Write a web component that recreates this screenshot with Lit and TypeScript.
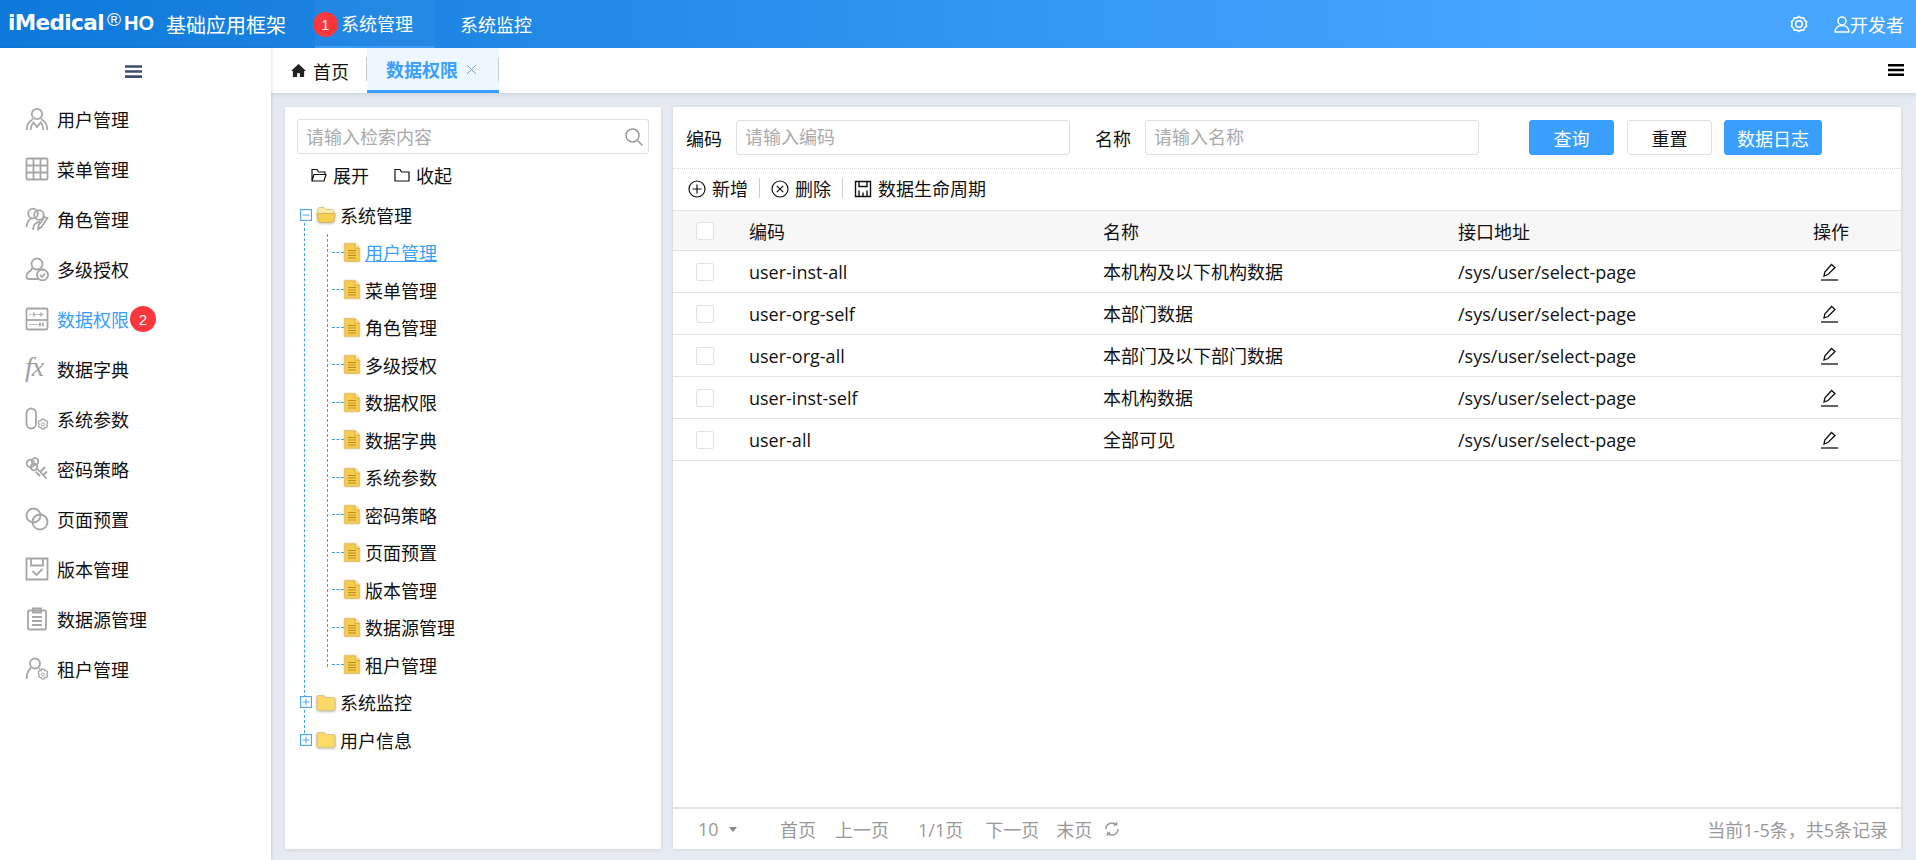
import { LitElement, html, css, svg } from "lit";
import { customElement } from "lit/decorators.js";

const flower = svg`<path d="M18 12c1 0 1.800.9 2 1.700.9-.2 2-.1 2.500 1 .4 1-.1 1.900-.7 2.500.6.600.9 1.600.4 2.500-.6.900-1.600 1-2.400.8-.2.800-.9 1.700-1.800 1.700s-1.600-.9-1.800-1.700c-.8.200-1.800.1-2.400-.8-.5-.9-.2-1.900.4-2.500-.6-.6-1.100-1.500-.7-2.500.5-1.100 1.600-1.200 2.500-1 .2-.8 1-1.700 2-1.700z" stroke-width="1.300"/><circle cx="18" cy="17.500" r="1.500" stroke-width="1"/>`;
const menuIcons: Record<string, unknown> = {
  user: svg`<circle cx="12" cy="7" r="5.200"/><path d="M8 12C4 14 1.800 18 1.600 23M16 12c4 2 6.200 6 6.400 11M5.500 23c.3-3.500 1.500-6 2.800-7.500L12 20l3.700-4.500c1.300 1.500 2.500 4 2.800 7.500"/>`,
  grid: svg`<rect x="1.500" y="1.500" width="21" height="21" rx="1"/><path d="M1.500 8.500h21M1.500 15.500h21M8.500 1.500v21M15.500 1.500v21"/>`,
  role: svg`<circle cx="8" cy="6.500" r="4.800"/><circle cx="14" cy="8" r="4.800"/><path d="M1.500 20c.5-5 2-7.500 5-8.500M8 23c0-5 3-8 7-8M22.500 11l-6 9-3.500 2 .5-3.500 6-8.500z"/>`,
  auth: svg`<circle cx="12" cy="7" r="5.500"/><path d="M7.500 11c-1 2-1.500 2.500-3 3.500-2 1-3 2.500-3 5 0 2 .8 2.500 2.500 2.500h9M16.500 12c1 .5 2 1 2.500 1.500"/><circle cx="17.500" cy="18" r="5.500"/><path d="M15 18l2 2 3-3.500"/>`,
  data: svg`<rect x="1.500" y="1.500" width="21" height="21" rx="1.500"/><path d="M1.500 13h21"/><path d="M4.500 7.500h15M4.500 17.500h15" stroke-width="1.200" stroke-dasharray="2 1"/><path d="M9 5.500v4M16 5.500v4M15 15.500v4M18 15.500v4" stroke-width="1.500"/>`,
  param: svg`<rect x="1.500" y="1.500" width="9.500" height="20" rx="4.750"/>${flower}`,
  key: svg`<circle cx="5.500" cy="6.500" r="3.800"/><circle cx="10" cy="4.500" r="3.300"/><circle cx="9" cy="10" r="3.300"/><path d="M11.500 11l10 10.500M15 15l5-5M18 18.500l4-4M11 15l4 4"/>`,
  page: svg`<circle cx="8.500" cy="8.500" r="7"/><circle cx="15" cy="15" r="7.500"/>`,
  save: svg`<path d="M1.500 1.500h21v21h-21z"/><path d="M6 1.500v7h12v-7M7.500 14l4 4 6-6"/>`,
  clip: svg`<rect x="3" y="3.500" width="18" height="19" rx="1.500"/><path d="M8 1.500h8v4h-8zM7 10h10M7 14h10M7 18h10"/>`,
  tenant: svg`<circle cx="10" cy="6.500" r="5"/><path d="M6 11C3 13 1.800 17 1.500 22M14 11.500c.6.300 1.200.7 1.700 1.200"/>${flower}`,
};

const menus = [
  ["user", "用户管理"], ["grid", "菜单管理"], ["role", "角色管理"], ["auth", "多级授权"],
  ["data", "数据权限"], ["fx", "数据字典"], ["param", "系统参数"], ["key", "密码策略"],
  ["page", "页面预置"], ["save", "版本管理"], ["clip", "数据源管理"], ["tenant", "租户管理"],
];
const children = ["用户管理", "菜单管理", "角色管理", "多级授权", "数据权限", "数据字典", "系统参数", "密码策略", "页面预置", "版本管理", "数据源管理", "租户管理"];
const rows = [
  ["user-inst-all", "本机构及以下机构数据"],
  ["user-org-self", "本部门数据"],
  ["user-org-all", "本部门及以下部门数据"],
  ["user-inst-self", "本机构数据"],
  ["user-all", "全部可见"],
];

const burger = (cls: string) => html`<svg class=${cls} viewBox="0 0 16 12"><path d="M0 1.250h16M0 6h16M0 10.750h16" fill="none" stroke="currentColor" stroke-width="2.500"/></svg>`;
const fileIcon = html`<svg class="file" viewBox="0 0 16 19"><path d="M.8.800h10l4.400 4.400v13H.8z" fill="#f7cd4e" stroke="#e5bd63" stroke-width="1.200"/><path d="M11 .8v4.400h4.200" fill="#fbe7a0" stroke="#d9a93a"/><path d="M4 7.500h8M4 10h8M4 12.500h8M4 15h8" stroke="#bd8a1c" stroke-width="1"/></svg>`;
const folderClosed = html`<svg class="folder" viewBox="0 0 20 17"><path d="M1 3.500C1 2 2 1.500 3 1.500h4.500L9.500 3.500H17c1.200 0 2 .8 2 2v9c0 1.200-.8 1.800-2 1.800H3c-1.200 0-2-.6-2-1.800z" fill="#fdd968" stroke="#d9c48c" stroke-width="1.200"/></svg>`;
const folderOpen = html`<svg class="folder" viewBox="0 0 20 17"><path d="M2 3.500C2 2 3 1.500 4 1.500h4L10 3.500h6c1 0 2 .7 2 2V8H2z" fill="#fbeaa9" stroke="#d9c48c"/><path d="M.8 7.500h18.400L18 14.500c-.2 1.200-1 1.800-2 1.800H4c-1 0-1.800-.6-2-1.800z" fill="#f8d050" stroke="#d3b35f"/></svg>`;
const expander = (open: boolean) => html`<svg class="exp" viewBox="0 0 12 12"><rect x=".5" y=".5" width="11" height="11" fill="#fff" stroke="#4ea6f8" stroke-width="1.300"/><path d=${open ? "M2.500 6h7" : "M2.500 6h7M6 2.500v7"} stroke="#4ea6f8"/></svg>`;

@customElement("app-root")
export class AppRoot extends LitElement {
  static styles = css`
    :host { display: block; height: 860px; overflow: hidden; font-family: "Open Sans", "Noto Sans CJK SC", sans-serif; font-size: 18px; color: #111; background: #e6eaf2; }
    * { box-sizing: border-box; }
    svg { display: block; flex: none; }
    .top { height: 48px; display: flex; align-items: center; color: #fff; background: linear-gradient(90deg, #0e79d9 0%, #45a5ff 80%, #45a5ff 100%); }
    .logo { display: flex; width: 166px; padding: 0 0 4px 8px; align-items: baseline; font-weight: 700; white-space: nowrap; }
    .logo b { font-family: "DejaVu Sans", sans-serif; font-size: 21.500px; letter-spacing: -.6px; }
    .logo i { font-family: "Liberation Sans", sans-serif; font-style: normal; font-weight: 400; font-size: 19px; position: relative; top: -4px; margin: 0 3px 0 3px; }
    .logo span { font-family: "Liberation Sans", sans-serif; font-size: 20px; }
    .sys { font-size: 20px; width: 147px; white-space: nowrap; }
    .nav { height: 48px; display: flex; align-items: center; position: relative; font-size: 18px; }
    .nav.on { width: 120px; margin-left: 2px; padding-left: 26px; background: rgba(255,255,255,.04); border-bottom: 2px solid #3d9df5; }
    .nav.two { margin-left: 25px; }
    .badge { width: 25px; height: 25px; border-radius: 50%; background: #f9373c; color: #fff; font-size: 14px; display: flex; align-items: center; justify-content: center; font-family: "Liberation Sans", sans-serif; flex: none; }
    .nav .badge { position: absolute; left: -2px; top: 12px; }
    .spacer { flex: 1; }
    .gear { width: 18px; height: 18px; margin-right: 25px; }
    .usr { width: 18px; height: 18px; }
    .devname { margin-right: 12px; margin-left: -1px; }
    .body { display: flex; height: 812px; }
    .side { width: 271px; background: #fff; box-shadow: 1px 0 3px rgba(0,0,0,.12); position: relative; z-index: 2; }
    .side-top { height: 46px; display: flex; align-items: center; justify-content: center; color: #3c4d6e; padding-right: 5px; }
    .b1 { width: 17px; height: 13px; }
    .mi { height: 50px; display: flex; align-items: center; gap: 8px; padding-left: 25px; color: #111; }
    .mi svg { width: 24px; height: 24px; fill: none; stroke: #a6a6a6; stroke-width: 1.800; }
    .mi.on { color: #3a9efd; }
    .mi .badge { margin-left: -7px; width: 26px; height: 26px; font-size: 15px; }
    .fx { width: 24px; font: italic 28px "Liberation Serif", serif; color: #a0a0a0; line-height: 24px; white-space: nowrap; letter-spacing: -1px; margin-top: -4px; }
    .main { flex: 1; min-width: 0; display: flex; flex-direction: column; }
    .tabs { height: 45px; background: #fff; display: flex; box-shadow: 0 2px 4px rgba(0,0,0,.1); position: relative; }
    .tab { display: flex; align-items: center; height: 45px; }
    .home { width: 96px; padding-left: 20px; gap: 7px; }
    .home svg { width: 15px; height: 15px; }
    .tab.on { width: 132px; padding-left: 19px; background: #ecf7ff; color: #3a9efd; font-weight: 600; border-bottom: 3px solid #3a9efd; position: relative; }
    .tab.on::before, .tab.on::after { content: ""; position: absolute; top: 9px; height: 24px; width: 1px; background: #ccc; }
    .tab.on::before { left: -1px; } .tab.on::after { right: 0; }
    .tab.on svg { width: 11px; height: 11px; margin-left: 8px; }
    .b2 { width: 16px; height: 12px; position: absolute; right: 12px; top: 16px; color: #000; }
    .content { flex: 1; min-height: 0; display: flex; gap: 12px; padding: 14px 15px 11px 14px; }
    .left { width: 376px; background: #fff; padding: 12px 12px 0 12px; box-shadow: 0 1px 4px rgba(0,0,0,.1); }
    .search { height: 35px; border: 1px solid #dcdfe6; border-radius: 3px; display: flex; align-items: center; justify-content: space-between; padding: 0 4px 2px 8px; color: #aaa; }
    .search svg { width: 20px; height: 20px; margin-top: 2px; }
    .ops { display: flex; height: 44px; align-items: center; padding: 0 0 2px 14px; }
    .ops div { display: flex; align-items: center; gap: 6px; margin-right: 25px; }
    .ops svg { width: 16px; height: 14px; }
    .tree { position: relative; margin-top: -2px; }
    .guide1 { position: absolute; left: 7px; top: 27px; height: 510px; border-left: 1px dashed #3a9efd; }
    .guide2 { position: absolute; left: 30px; top: 38px; height: 433px; border-left: 1px dashed #3a9efd; }
    .tr { height: 37.500px; display: flex; align-items: center; position: relative; }
    .exp { width: 12px; height: 12px; margin-left: 3px; position: relative; }
    .folder { width: 20px; height: 17px; margin: 0 4px 0 4px; filter: drop-shadow(0 1px 1px rgba(0,0,0,.25)); }
    .tr.child { padding-left: 47px; gap: 5px; }
    .tr.child::before { content: ""; position: absolute; left: 35px; width: 12px; border-top: 1px dashed #3a9efd; }
    .file { width: 16px; height: 19px; filter: drop-shadow(0 0 1px rgba(200,170,80,.6)); }
    .tr .sel { color: #3a9efd; text-decoration: underline; }
    .right { flex: 1; min-width: 0; background: #fff; display: flex; flex-direction: column; box-shadow: 0 0 3px rgba(0,0,0,.14); }
    .filter { height: 62px; display: flex; align-items: center; padding-left: 13px; border-bottom: 1px dotted #d8d8d8; flex: none; }
    .filter label { width: 50px; }
    .inp { width: 334px; height: 35px; border: 1px solid #dcdfe6; border-radius: 3px; padding-left: 8px; line-height: 32px; color: #aaa; margin-right: 25px; }
    .btn { height: 35px; width: 85px; border: 1px solid #dcdfe6; border-radius: 3px; display: flex; align-items: center; justify-content: center; margin-right: 12px; }
    .btn.p { background: #3a9efd; border-color: #3a9efd; color: #fff; }
    .btn.first { margin: 0 13px 0 25px; }
    .btn.w { width: 98px; }
    .tool { height: 41px; display: flex; align-items: center; padding: 0 0 4px 15px; flex: none; }
    .tool div { display: flex; align-items: center; gap: 6px; }
    .tool svg { width: 18px; height: 18px; margin-top: 2px; }
    .tool i { width: 1px; height: 20px; background: #ccc; margin: 0 11px; }
    .hd, .rw { display: grid; grid-template-columns: 76px 354px 355px 303px 140px; align-items: center; }
    .hd { height: 41px; background: #f7f7f7; border-top: 1px solid #e2e2e2; border-bottom: 1px solid #e2e2e2; flex: none; }
    .rw { height: 42px; border-bottom: 1px solid #e2e2e2; flex: none; }
    .ck { width: 18px; height: 18px; border: 1px solid #e2e2e2; border-radius: 2px; background: #fff; margin-left: 23px; }
    .zh { position: relative; top: -1px; }
    .op { text-align: center; }
    .pen { width: 19px; height: 19px; margin: 0 auto; position: relative; left: -2px; }
    .fill { flex: 1; }
    .foot { height: 42px; border-top: 2px solid #e2e2e2; display: flex; align-items: center; padding-left: 25px; padding-right: 13px; color: #999; flex: none; }
    .foot .n { width: 31px; }
    .tri { width: 0; height: 0; border: 4px solid transparent; border-top: 5px solid #888; margin-top: 5px; margin-right: 43px; }
    .foot span { white-space: nowrap; }
    .foot svg { width: 16px; height: 16px; margin-left: 12px; }
    .g19 { margin-right: 19px; } .g29 { margin-right: 29px; } .g22 { margin-right: 22px; } .g18 { margin-right: 17px; }
    .total { margin-left: auto; }
  `;

  render() {
    return html`
      <div class="top">
        <div class="logo"><b>iMedical</b><i>®</i><span>HO</span></div>
        <div class="sys">基础应用框架</div>
        <div class="nav on"><span class="badge">1</span>系统管理</div>
        <div class="nav two">系统监控</div>
        <div class="spacer"></div>
        <svg class="gear" viewBox="0 0 18 18" fill="none" stroke="#fff" stroke-width="1.600"><path d="M9 1.500l2 1.500 2.600-.2 1 2.300 2 1.600-.7 2.300.7 2.300-2 1.600-1 2.300-2.600-.2-2 1.500-2-1.500-2.600.2-1-2.300-2-1.600.7-2.300-.7-2.300 2-1.600 1-2.300 2.600.2z"/><circle cx="9" cy="9" r="3.300"/></svg>
        <svg class="usr" viewBox="0 0 18 18" fill="none" stroke="#fff" stroke-width="1.500"><circle cx="9" cy="6" r="4"/><path d="M2 17c0-4 3-6.500 7-6.500s7 2.500 7 6.500z" stroke-linejoin="round"/></svg>
        <span class="devname">开发者</span>
      </div>
      <div class="body">
        <div class="side">
          <div class="side-top">${burger("b1")}</div>
          ${menus.map(([k, t]) => html`
            <div class="mi ${t === "数据权限" ? "on" : ""}">
              ${k === "fx" ? html`<span class="fx">fx</span>` : html`<svg viewBox="0 0 24 24">${menuIcons[k]}</svg>`}
              <span>${t}</span>
              ${t === "数据权限" ? html`<span class="badge">2</span>` : ""}
            </div>`)}
        </div>
        <div class="main">
          <div class="tabs">
            <div class="tab home">
              <svg viewBox="0 0 16 16"><path d="M8 1L0 8.500h2V15h4.500v-4h3v4H14V8.500h2z" fill="#222"/></svg>
              首页
            </div>
            <div class="tab on">数据权限
              <svg viewBox="0 0 11 11"><path d="M1 1l9 9M10 1l-9 9" stroke="#7f9fc0" fill="none"/></svg>
            </div>
            ${burger("b2")}
          </div>
          <div class="content">
            <div class="left">
              <div class="search"><span>请输入检索内容</span>
                <svg viewBox="0 0 20 20" fill="none" stroke="#9a9a9a" stroke-width="1.500"><circle cx="8.500" cy="8.500" r="6.500"/><path d="M13.500 13.500l5 5"/></svg>
              </div>
              <div class="ops">
                <div><svg viewBox="0 0 16 14" fill="none" stroke="#111" stroke-width="1.200"><path d="M1 13V1.500h5L7.500 4H14v2.500M1 13h12l2-6.500H3z"/></svg>展开</div>
                <div><svg viewBox="0 0 16 14" fill="none" stroke="#111" stroke-width="1.200"><path d="M1 13V1.500h5L7.500 4H15v9z"/></svg>收起</div>
              </div>
              <div class="tree">
                <div class="guide1"></div>
                <div class="guide2"></div>
                <div class="tr">${expander(true)}${folderOpen}<span>系统管理</span></div>
                ${children.map((c, i) => html`<div class="tr child">${fileIcon}<span class=${i === 0 ? "sel" : ""}>${c}</span></div>`)}
                <div class="tr">${expander(false)}${folderClosed}<span>系统监控</span></div>
                <div class="tr">${expander(false)}${folderClosed}<span>用户信息</span></div>
              </div>
            </div>
            <div class="right">
              <div class="filter">
                <label>编码</label><div class="inp">请输入编码</div>
                <label>名称</label><div class="inp">请输入名称</div>
                <div class="btn p first">查询</div>
                <div class="btn">重置</div>
                <div class="btn p w">数据日志</div>
              </div>
              <div class="tool">
                <div><svg viewBox="0 0 18 18" fill="none" stroke="#111" stroke-width="1.200"><circle cx="9" cy="9" r="8"/><path d="M4.500 9h9M9 4.500v9"/></svg>新增</div>
                <i></i>
                <div><svg viewBox="0 0 18 18" fill="none" stroke="#111" stroke-width="1.200"><circle cx="9" cy="9" r="8"/><path d="M5.800 5.800l6.400 6.400M12.200 5.800l-6.400 6.400"/></svg>删除</div>
                <i></i>
                <div><svg viewBox="0 0 18 18" fill="none" stroke="#111" stroke-width="1.400"><path d="M1.500 1.500h15v15h-15z"/><path d="M5 1.500v5h8v-5M5 16.500v-6M9 16.500v-4M13 16.500v-6"/></svg>数据生命周期</div>
              </div>
              <div class="hd"><div class="ck"></div><span>编码</span><span>名称</span><span>接口地址</span><span class="op">操作</span></div>
              ${rows.map(([a, b]) => html`
                <div class="rw"><div class="ck"></div><span>${a}</span><span class="zh">${b}</span><span>/sys/user/select-page</span>
                  <div class="op"><svg class="pen" viewBox="0 0 19 19" fill="none" stroke="#111" stroke-width="1.300"><path d="M4 14l.8-4L11.500 2.500l3.500 3L8 12.500z"/><path d="M1 18h17"/></svg></div>
                </div>`)}
              <div class="fill"></div>
              <div class="foot">
                <span class="n">10</span><div class="tri"></div>
                <span class="g19">首页</span><span class="g29">上一页</span><span class="g22">1/1页</span><span class="g18">下一页</span><span>末页</span>
                <svg viewBox="0 0 16 16" fill="none" stroke="#999" stroke-width="1.500"><path d="M2 8a6 6 0 0 1 10-4.500M14 8a6 6 0 0 1-10 4.500M12.500 1v3h-3M3.500 15v-3h3"/></svg>
                <span class="total">当前1-5条，共5条记录</span>
              </div>
            </div>
          </div>
        </div>
      </div>
    `;
  }
}
